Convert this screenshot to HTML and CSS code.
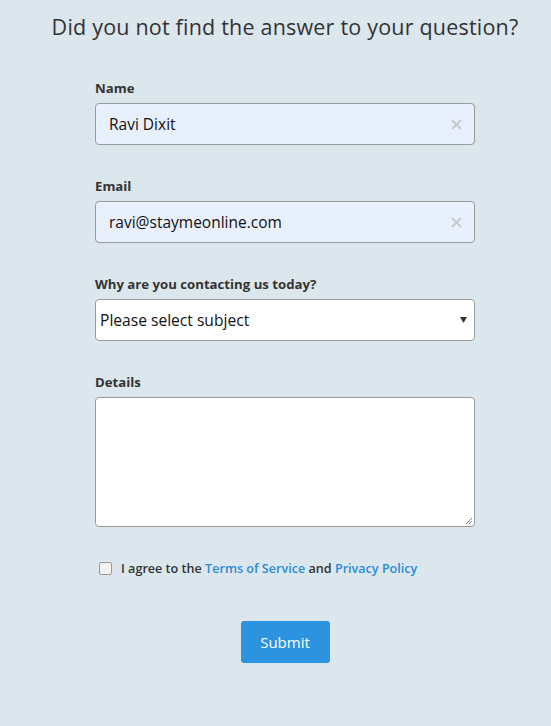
FILE: index.html
```html
<!DOCTYPE html>
<html>
<head>
<meta charset="utf-8">
<link rel="stylesheet" href="styles.css">
</head>
<body>
<div class="page">
  <h1 class="title">Did you not find the answer to your question?</h1>
  <form class="form">
    <div class="field">
      <label class="label">Name</label>
      <div class="input filled"><span>Ravi Dixit</span><svg class="clear" width="11" height="11" viewBox="0 0 11 11"><path d="M1 1 L10 10 M10 1 L1 10" stroke="#c8c8c8" stroke-width="1.8"/></svg></div>
    </div>
    <div class="field">
      <label class="label">Email</label>
      <div class="input filled"><span>ravi@staymeonline.com</span><svg class="clear" width="11" height="11" viewBox="0 0 11 11"><path d="M1 1 L10 10 M10 1 L1 10" stroke="#c8c8c8" stroke-width="1.8"/></svg></div>
    </div>
    <div class="field">
      <label class="label">Why are you contacting us today?</label>
      <div class="select"><span>Please select subject</span><svg class="caret" width="7" height="6" viewBox="0 0 7 6"><path d="M0 0 H7 L3.5 6 Z" fill="#333"/></svg></div>
    </div>
    <div class="field">
      <label class="label">Details</label>
      <div class="textarea">
        <svg class="grip" width="9" height="9" viewBox="0 0 9 9"><path d="M8 2 L2 8 M8 5 L5 8" stroke="#777" stroke-width="1"/></svg>
      </div>
    </div>
    <div class="agree">
      <span class="check"></span>
      <span class="agree-text">I agree to the <a class="link">Terms of Service</a> and <a class="link">Privacy Policy</a></span>
    </div>
    <div class="actions">
      <button class="submit" type="button">Submit</button>
    </div>
  </form>
</div>
</body>
</html>
```
FILE: styles.css
```css
html, body { margin: 0; padding: 0; }
body {
  background: #dce6ed;
  font-family: "Open Sans", "Noto Sans", sans-serif;
  color: #333;
  width: 551px;
  height: 726px;
  overflow: hidden;
}
.page { padding-left: 19px; }
.title {
  margin: 0;
  padding-top: 11px;
  font-size: 21.5px;
  font-weight: 400;
  text-align: center;
  color: #333;
  line-height: 32px;
  letter-spacing: 0.2px;
}
.form {
  width: 380px;
  margin: 0 auto;
  padding-top: 36px;
}
.field { margin-bottom: 32px; }
.field:last-of-type { margin-bottom: 0; }
.label {
  display: block;
  font-size: 13.2px;
  font-weight: 700;
  line-height: 18px;
  margin-bottom: 6px;
  color: #333;
}
.input, .select {
  box-sizing: border-box;
  height: 42px;
  border: 1px solid #9a9a9a;
  border-radius: 4px;
  display: flex;
  align-items: center;
  justify-content: space-between;
  font-size: 15.5px;
  color: #111;
}
.input.filled {
  background: #e8f0fe;
  padding: 0 12px 0 13px;
}
.clear { display: block; }
.select {
  background: #fff;
  padding: 0 7px 0 4px;
  font-size: 15.6px;
}
.caret { display: block; }
.textarea {
  box-sizing: border-box;
  height: 130px;
  background: #fff;
  border: 1px solid #9a9a9a;
  border-radius: 4px;
  position: relative;
}
.grip { position: absolute; right: 1px; bottom: 1px; }
.agree {
  display: flex;
  align-items: center;
  padding-left: 4px;
  margin-top: 33px;
  font-size: 12.6px;
  font-weight: 600;
}
.check {
  width: 11px;
  height: 11px;
  border: 1px solid #999;
  border-radius: 2px;
  background: #f3f3f3;
  margin-right: 9px;
}
.link { color: #2b8cdc; }
.actions {
  display: flex;
  justify-content: center;
  margin-top: 44px;
}
.submit {
  width: 89px;
  height: 42px;
  border: 0;
  border-radius: 3px;
  background: #2b93e0;
  color: #fff;
  font-family: inherit;
  font-size: 15px;
}
```
